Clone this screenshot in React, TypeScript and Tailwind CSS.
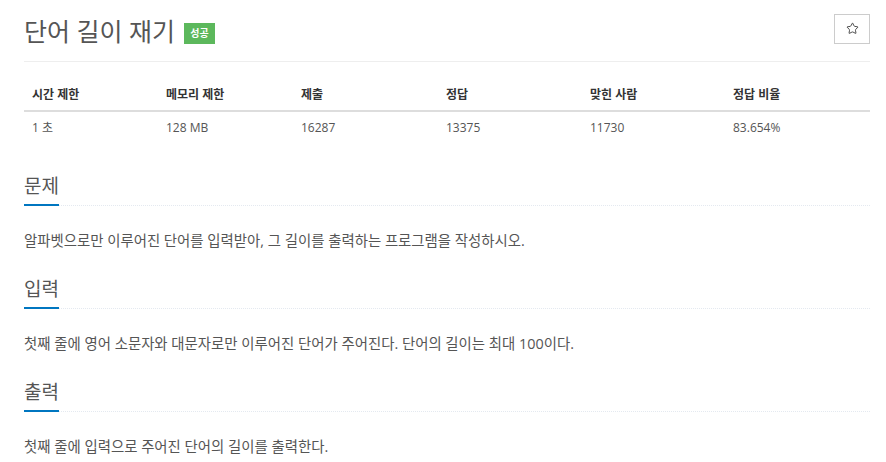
import { Star } from 'lucide-react';

const stats = [
    { label: '시간 제한', value: '1 초', w: 'w-[134px]' },
    { label: '메모리 제한', value: '128 MB', w: 'w-[135px]' },
    { label: '제출', value: '16287', w: 'w-[145px]' },
    { label: '정답', value: '13375', w: 'w-[144px]' },
    { label: '맞힌 사람', value: '11730', w: 'w-[143px]' },
    { label: '정답 비율', value: '83.654%', w: 'flex-1' },
];

const sections = [
    { title: '문제', body: '알파벳으로만 이루어진 단어를 입력받아, 그 길이를 출력하는 프로그램을 작성하시오.' },
    { title: '입력', body: '첫째 줄에 영어 소문자와 대문자로만 이루어진 단어가 주어진다. 단어의 길이는 최대 100이다.' },
    { title: '출력', body: '첫째 줄에 입력으로 주어진 단어의 길이를 출력한다.' },
];

const Section = ({ title, body }: { title: string; body: string }) => (
    <div className="mt-[27px] first:mt-[31px]">
        <div className="border-b border-dotted border-[#e4e9f0]">
            <h2 className="inline-block text-[19px] leading-[22px] pb-[7px] text-[#555] border-b-2 border-[#0076C0] -mb-px">
                {title}
            </h2>
        </div>
        <p className="mt-[25px] text-[14.4px] leading-[20px] text-[#555]">{body}</p>
    </div>
);

const App = () => {
    return (
        <div className="min-h-screen bg-white pl-6 pr-4 font-['Open_Sans','Noto_Sans_CJK_KR',sans-serif]">
            {/* Title */}
            <div className="flex items-center justify-between h-[62px] border-b border-[#eee]">
                <div className="flex items-center mt-px">
                    <h1 className="text-[25px] leading-[32px] text-[#555]">단어 길이 재기</h1>
                    <span className="ml-[9px] mt-[5px] h-[21px] w-[31px] flex items-center justify-center bg-[#5cb85c] text-white text-[10px] font-bold">
                        성공
                    </span>
                </div>
                <button className="w-9 h-[30px] -mt-[4px] border border-[#ccc] flex items-center justify-center bg-white">
                    <Star size={13} strokeWidth={1.6} color="#333" />
                </button>
            </div>

            {/* Stats table */}
            <div className="mt-[18px] text-[12px]">
                <div className="flex h-[32px] items-center border-b-2 border-[#ddd]">
                    {stats.map((s) => (
                        <div key={s.label} className={`${s.w} px-2 font-bold text-[#333]`}>
                            {s.label}
                        </div>
                    ))}
                </div>
                <div className="flex h-[32px] items-center">
                    {stats.map((s) => (
                        <div key={s.label} className={`${s.w} px-2 text-[#555]`}>
                            {s.value}
                        </div>
                    ))}
                </div>
            </div>

            {/* Sections */}
            <div>
                {sections.map((s) => (
                    <Section key={s.title} title={s.title} body={s.body} />
                ))}
            </div>
        </div>
    );
};

export default App;
